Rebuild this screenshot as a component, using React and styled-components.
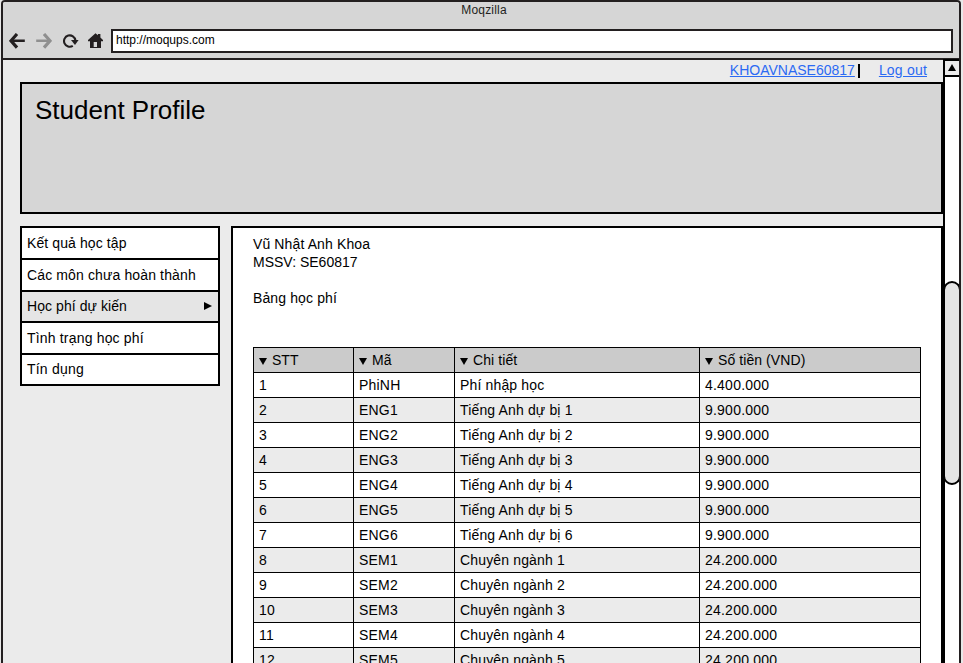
import React from "react";
import styled, { createGlobalStyle } from "styled-components";

const INK = "#231f20";

const GlobalStyle = createGlobalStyle`
  * { box-sizing: border-box; }
  html, body { margin: 0; padding: 0; height: 663px; overflow: hidden; background: #e8e8e8; }
  body { font-family: "Liberation Sans", Arial, sans-serif; font-size: 14px; color: #000; }
`;

const Browser = styled.div`
  width: 960px;
  height: 663px;
  margin-left: 1px;
  border: 2px solid ${INK};
  border-bottom: 0;
  border-radius: 4px 4px 0 0;
  background: #ebebeb;
  display: flex;
  flex-direction: column;
  overflow: hidden;
`;

const Chrome = styled.header`
  height: 58px;
  flex: none;
  background: #d6d6d6;
  border-bottom: 2px solid ${INK};
`;

const WindowTitle = styled.div`
  height: 27px;
  padding-left: 6px;
  text-align: center;
  font-size: 12px;
  line-height: 16px;
  letter-spacing: 0.2px;
  color: ${INK};
`;

const Toolbar = styled.div`
  display: flex;
  align-items: flex-start;
  padding-right: 6px;
`;

const NavIcons = styled.div`
  width: 108px;
  height: 24px;
  display: flex;
  align-items: center;
  padding-left: 6px;
  gap: 11px;
  svg { display: block; flex: none; }
  svg:last-child { margin-left: -2px; }
`;

const AddressBar = styled.div`
  flex: 1;
  height: 24px;
  border: 2px solid ${INK};
  background: #fff;
  padding-left: 3px;
  font-size: 12px;
  line-height: 19px;
`;

const Body = styled.div`
  display: flex;
  flex: 1;
  min-height: 0;
`;

const Page = styled.main`
  width: 940px;
  flex: none;
  padding-left: 17px;
  display: flex;
  flex-direction: column;
`;

const UserBar = styled.nav`
  height: 22px;
  flex: none;
  display: flex;
  justify-content: flex-end;
  padding-right: 16px;
  font-size: 14px;
  line-height: 21px;
`;

const TopLink = styled.a`
  color: #2b6af3;
  text-decoration: underline;
  letter-spacing: ${(p) => p.$spacing};
`;

const Divider = styled.span`
  width: 2px;
  height: 14px;
  margin: 4px 19px 0 3px;
  background: #000;
`;

const Banner = styled.section`
  height: 132px;
  flex: none;
  border: 2px solid #000;
  background: #d6d6d6;
  padding: 11px 13px;
`;

const Heading = styled.h1`
  margin: 0;
  font-size: 26px;
  font-weight: 400;
  line-height: 30px;
`;

const Columns = styled.div`
  display: flex;
  flex: 1;
  min-height: 0;
  gap: 11px;
  margin-top: 12px;
`;

const Menu = styled.ul`
  list-style: none;
  margin: 0;
  padding: 0 0 2px;
  width: 200px;
  height: 160px;
  display: grid;
  grid-template-rows: 32px 32px 31px 32px 31px;
  background: #000;
`;

const MenuItem = styled.li`
  display: flex;
  justify-content: space-between;
  margin: 2px 2px 0;
  padding: 0 6px 0 5px;
  line-height: ${(p) => (p.$short ? "28px" : "30px")};
  background: ${(p) => (p.$active ? "#e5e5e5" : "#fff")};
  letter-spacing: ${(p) => p.$spacing};
  svg { margin-top: 10px; }
`;

const Panel = styled.section`
  flex: 1;
  border: 2px solid #000;
  border-bottom: 0;
  background: #fff;
  padding: 7px 20px 0;
  overflow: hidden;
`;

const Line = styled.p`
  margin: 0;
  height: 18px;
  line-height: 18px;
  letter-spacing: ${(p) => p.$spacing || "0.12px"};
`;

const Table = styled.div`
  width: 668px;
  margin-top: 40px;
  border: solid #000;
  border-width: 1px 1px 0 0;
`;

const Row = styled.div`
  display: grid;
  grid-template-columns: 100px 101px 245px 221px;
  height: 25px;
  background: ${(p) => (p.$head ? "#cbcbcb" : p.$shaded ? "#ebebeb" : "#fff")};
`;

const Cell = styled.div`
  display: flex;
  align-items: center;
  gap: 5px;
  border: solid #000;
  border-width: 0 0 1px 1px;
  padding: 0 5px 0 5px;
  letter-spacing: ${(p) => p.$spacing};
  svg { margin-top: 3px; }
`;

const ScrollTrack = styled.aside`
  width: 18px;
  flex: none;
  margin-top: -1px;
  border: 2px solid #000;
  border-bottom: 0;
  background: #fff;
`;

const ScrollButton = styled.div`
  height: 16px;
  border-bottom: 2px solid #000;
  background: #ebebeb;
  display: flex;
  align-items: flex-start;
  justify-content: center;
  padding-top: 3px;
`;

const ScrollThumb = styled.div`
  height: 204px;
  margin: 204px -2px 0;
  border: 2px solid #000;
  border-radius: 9px;
  background: #e5e5e5;
`;

const MENU = [
  { label: "Kết quả học tập", spacing: "0.1px" },
  { label: "Các môn chưa hoàn thành", spacing: "0.13px" },
  { label: "Học phí dự kiến", spacing: "0.07px", active: true, short: true },
  { label: "Tình trạng học phí", spacing: "0.18px" },
  { label: "Tín dụng", spacing: "0.2px", short: true },
];

const COLUMNS = [
  { head: "STT", headSpacing: "0", spacing: "0.3px" },
  { head: "Mã", headSpacing: "0.2px", spacing: "0.2px" },
  { head: "Chi tiết", headSpacing: "0.08px", spacing: "0.15px" },
  { head: "Số tiền (VND)", headSpacing: "0.08px", spacing: "0.22px" },
];

const ROWS = [
  ["1", "PhiNH", "Phí nhập học", "4.400.000"],
  ...[1, 2, 3, 4, 5, 6].map((n) => [`${n + 1}`, `ENG${n}`, `Tiếng Anh dự bị ${n}`, "9.900.000"]),
  ...[1, 2, 3, 4, 5].map((n) => [`${n + 7}`, `SEM${n}`, `Chuyên ngành ${n}`, "24.200.000"]),
];

const Arrow = ({ color, flip }) => (
  <svg width="16" height="16" viewBox="0 0 16 16" fill="none" stroke={color}>
    <g transform={flip ? "translate(16 0) scale(-1 1)" : undefined}>
      <path d="M2 7.8H15.8" strokeWidth="2.6" />
      <path d="M8 1L2 7.8L8 14.6" strokeWidth="3.2" />
    </g>
  </svg>
);

const Reload = () => (
  <svg width="16" height="16" viewBox="0 0 16 16">
    <path d="M9.8 12.9A5.7 5.7 0 1 1 12.4 7.4" fill="none" stroke={INK} strokeWidth="2.1" />
    <path d="M8 7H15.6L12 12Z" fill={INK} />
  </svg>
);

const Home = () => (
  <svg width="15" height="16" viewBox="0 0 15 16">
    <path
      d="M7.5 0.2L9.9 2.3V1H12.4V4.6L15 7V8.2H13V15H2V8.2H0V7ZM5.7 9V14H9V9Z"
      fill={INK}
      fillRule="evenodd"
    />
  </svg>
);

const Triangle = ({ points, w, h }) => (
  <svg width={w} height={h} viewBox={`0 0 ${w} ${h}`}>
    <polygon points={points} fill="#000" />
  </svg>
);

export default function App() {
  return (
    <>
      <GlobalStyle />
      <Browser>
        <Chrome>
          <WindowTitle>Moqzilla</WindowTitle>
          <Toolbar>
            <NavIcons>
              <Arrow color={INK} />
              <Arrow color="#8f8f8f" flip />
              <Reload />
              <Home />
            </NavIcons>
            <AddressBar>http://moqups.com</AddressBar>
          </Toolbar>
        </Chrome>
        <Body>
          <Page>
            <UserBar>
              <TopLink $spacing="0">KHOAVNASE60817</TopLink>
              <Divider />
              <TopLink $spacing="0.2px">Log out</TopLink>
            </UserBar>
            <Banner>
              <Heading>Student Profile</Heading>
            </Banner>
            <Columns>
              <Menu>
                {MENU.map((m) => (
                  <MenuItem key={m.label} $active={m.active} $short={m.short} $spacing={m.spacing}>
                    {m.label}
                    {m.active && <Triangle w={8} h={8} points="0,0 8,4 0,8" />}
                  </MenuItem>
                ))}
              </Menu>
              <Panel>
                <Line>Vũ Nhật Anh Khoa</Line>
                <Line $spacing="0">MSSV: SE60817</Line>
                <Line />
                <Line>Bảng học phí</Line>
                <Table>
                  <Row $head>
                    {COLUMNS.map((c) => (
                      <Cell key={c.head} $spacing={c.headSpacing}>
                        <Triangle w={8} h={7} points="0,0 8,0 4,7" />
                        {c.head}
                      </Cell>
                    ))}
                  </Row>
                  {ROWS.map((r, i) => (
                    <Row key={r[0]} $shaded={i % 2 === 1}>
                      {r.map((c, j) => (
                        <Cell key={j} $spacing={COLUMNS[j].spacing}>{c}</Cell>
                      ))}
                    </Row>
                  ))}
                </Table>
              </Panel>
            </Columns>
          </Page>
          <ScrollTrack>
            <ScrollButton>
              <Triangle w={8} h={7} points="0,7 4,0 8,7" />
            </ScrollButton>
            <ScrollThumb />
          </ScrollTrack>
        </Body>
      </Browser>
    </>
  );
}
